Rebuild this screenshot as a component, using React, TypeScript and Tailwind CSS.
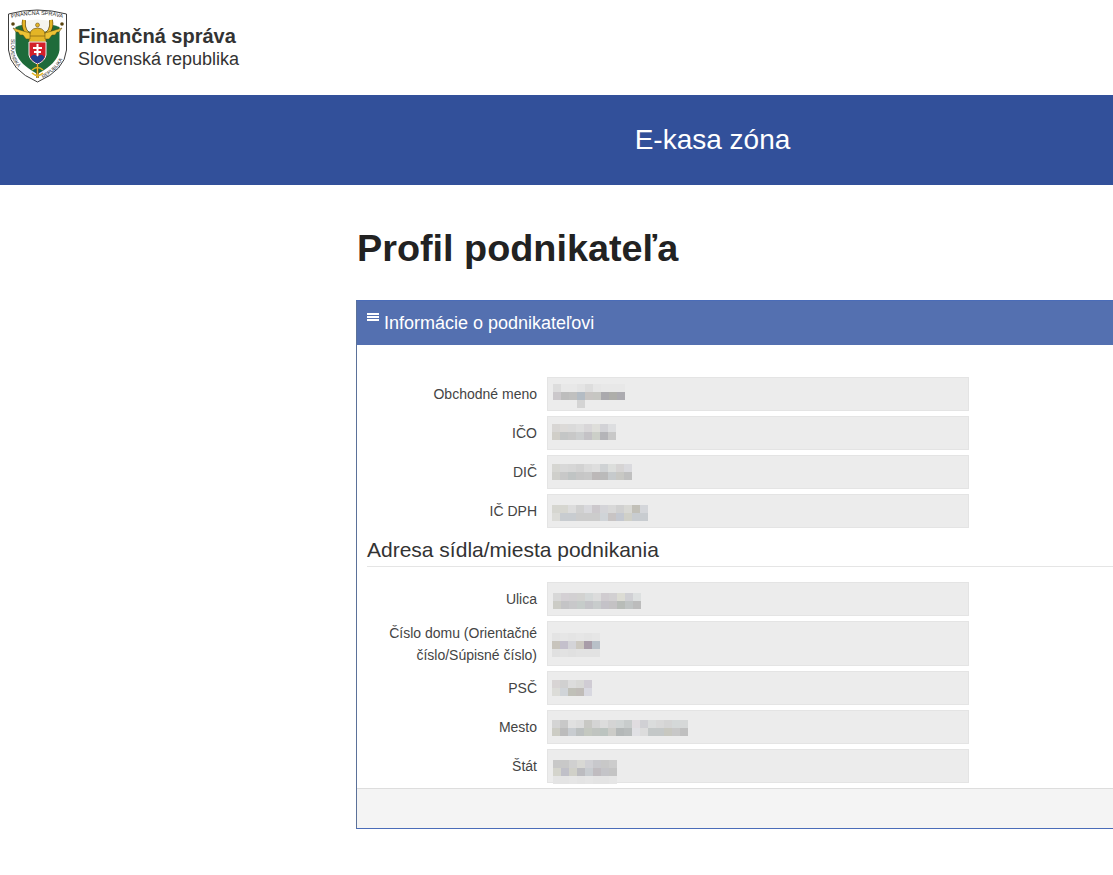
const sans = "font-['Liberation_Sans',Arial,sans-serif]"

type BlurData = { x: number; y: number; rows: string[] }

// pixelated values, one hex colour per 8px cell, "-" is an empty cell
const blurred: Record<string, BlurData> = {
  meno: {
    x: 5,
    y: 6,
    rows: [
      "dddddd e8e8e8 e8e8e8 e4e4e4 dddddd e6e6e6 e8e8e8 e8e8e8 e8e8e8",
      "cbc8cb bdbdbd c0c0bf b4bcc4 c8c5c3 c6c6c2 aaa9ad aeaeaa acabb0",
      "- - - d4d4d4 - - - - -",
    ],
  },
  ico: {
    x: 4,
    y: 7,
    rows: [
      "d8d6d4 dcdad8 dadada dedede d8d6d8 dededa d2d2d6 dddee0",
      "d0cec8 c4c6c6 c8c8c8 cccecf c4c2c6 cccfc8 b4b4b8 c8c8c8",
    ],
  },
  dic: {
    x: 4,
    y: 8,
    rows: [
      "d6d6d2 d8d8d8 d6d6d6 d2d2d2 dadada dedede cfd2d4 dcdedc d6d4d4 dadade",
      "cfcfcb c8c8c8 c0c4c4 c6c6c6 c8c8c8 bcb8b8 bababa c6cacc c8c8c4 c0c0c0",
    ],
  },
  dph: {
    x: 4,
    y: 10,
    rows: [
      "d6d6d0 d6d6d0 dcdcdc d0d0d0 d8d8dc ccc8cc d4d4d8 d8d8d8 d0d0d0 d8d8d4 c2c0b8 d4d6da",
      "dcdcd8 c8ccd0 c8ccd0 cccccc cccccc cccccc d0d4d8 c8c4c4 c4c8d0 d0d0c8 c8ccd0 c8ccd0",
    ],
  },
  ulica: {
    x: 5,
    y: 10,
    rows: [
      "d8d8d8 d4d0d4 d2d0d2 d2d2d0 d4d8d8 dcdcdc d0ccd0 d2d0d2 dcdcd4 d0d0d4 dde0e0",
      "ccccc6 c4c4c6 c8c8ca c6ccca c4c4c8 c8cccc c4c2c8 c4c2c4 b8bcb8 c0c4c4 bcbcbc",
    ],
  },
  cislo: {
    x: 4,
    y: 11,
    rows: [
      "e4e4e4 e6e6e6 e4e4e4 e6e6e6 e4e4e4 e6e6e6",
      "c8c4bc c4c0cc d4d4d8 ccc8c0 a89ca8 b8c0c8",
      "e0e0e0 e2e2e2 e0e0e0 e2e2e2 e2e2e2 e2e2e2",
    ],
  },
  psc: {
    x: 4,
    y: 8,
    rows: [
      "d8d4d4 d0d0d0 dcdcdc d8d8d6 d0ccd4",
      "dcdcd8 d0d4d8 c0c0b8 c0bcb8 d8d8e0",
    ],
  },
  mesto: {
    x: 4,
    y: 9,
    rows: [
      "d4d4d4 c8c8c8 e0e0e0 dcdcdc c8c8c4 d4d4d4 dcdcdc d4d4d4 d0d4d4 c8cccc e0dce0 d0d0d4 dadcdc d8d8d8 d4d4d4 d4d8d8 d6d8d8",
      "ccccc4 bcbcbc c8ccd0 bcc0c0 c4c8c0 c0c4c0 bcc4c0 ccccc8 b4b8b8 b8bcbc e0e0e4 dcdcdc c4c8c8 c4c8c8 c8c8c0 c8c8c8 c0c0c0",
    ],
  },
  stat: {
    x: 5,
    y: 10,
    rows: [
      "c8c8c8 c8c8c8 d0d0d0 d8d8d4 d0d0d4 c8c8cc c8c8c8 cccccc",
      "d4d4cc c0c0c8 d0d0c8 bcbcc0 c8ccd0 c0bcc0 c4c4c8 c4c4c4",
      "e4e4e4 e4e4e4 e6e6e6 e4e4e4 e6e6e6 e4e4e4 e4e4e4 e6e6e6",
    ],
  },
}

function Blur({ data }: { data: BlurData }) {
  return (
    <div className="flex flex-col blur-[0.4px]" style={{ marginLeft: data.x, marginTop: data.y }}>
      {data.rows.map((row, i) => (
        <div key={i} className="flex">
          {row.split(" ").map((c, j) => (
            <div key={j} className="h-2 w-2" style={{ backgroundColor: c === "-" ? "transparent" : `#${c}` }} />
          ))}
        </div>
      ))}
    </div>
  )
}

function Field({ label, data, tall }: { label: React.ReactNode; data: BlurData; tall?: boolean }) {
  return (
    <div className="flex">
      <div className="flex w-[180px] shrink-0 items-center justify-end pr-[10px] text-right text-[14px] leading-[22px] text-[#444]">
        <span>{label}</span>
      </div>
      <div className={`flex w-[422px] items-start border border-[#e4e4e4] bg-[#ececec] ${tall ? "h-[45px]" : "h-[34px]"}`}>
        <Blur data={data} />
      </div>
    </div>
  )
}

function Logo() {
  return (
    <svg width="61" height="75" viewBox="0 0 61 75" className="mb-[4px] shrink-0">
      <path d="M1.5 6 Q30 -2 59.5 6 L59.5 42 Q58 62 30.5 74 Q3 62 1.5 42 Z" fill="#fff" stroke="#3c3c3c" strokeWidth="1" />
      <path d="M8.5 19 Q30 11 52.5 19 L52.5 42 Q51 55 30.5 66 Q10 55 8.5 42 Z" fill="#1e6b3a" />
      <path d="M14 14 Q30 9 47 14 Q46 24 30.5 25 Q15 24 14 14 Z" fill="#f4f4ee" />
      <path d="M17 12 Q15 28 30.5 28 Q46 28 44 12" fill="none" stroke="#5a4510" strokeWidth="4" />
      <path d="M17 12 Q15 28 30.5 28 Q46 28 44 12" fill="none" stroke="#e4b526" strokeWidth="2.8" />
      <circle cx="30.5" cy="17" r="2" fill="#e4b526" stroke="#5a4510" strokeWidth="0.5" />
      <path d="M22 34 Q21 20 30.5 20 Q40 20 39 34 Z" fill="#e4b526" stroke="#5a4510" strokeWidth="0.6" />
      <path d="M21 28 H40" stroke="#8a6a14" strokeWidth="0.8" />
      <path d="M23 25 L6 20 L9 24 L11 24 L13 27 L16 27 L19 31 L23 31 Z" fill="#ecc235" stroke="#5a4510" strokeWidth="0.5" />
      <path d="M38 25 L55 20 L52 24 L50 24 L48 27 L45 27 L42 31 L38 31 Z" fill="#ecc235" stroke="#5a4510" strokeWidth="0.5" />
      <path d="M22 34 H39 V47 Q38 53 30.5 56 Q23 53 22 47 Z" fill="#d3202a" stroke="#f4f4f4" strokeWidth="1" />
      <path d="M29.5 36 H31.5 V39 H35 V41 H31.5 V43 H34 V45 H31.5 V50 H29.5 V45 H27 V43 H29.5 V41 H26 V39 H29.5 Z" fill="#fff" />
      <path d="M23.5 49 Q27 45 30.5 48.5 Q34 45 37.5 49 Q36 53 30.5 55.5 Q25 53 23.5 49 Z" fill="#1f3f8f" />
      <path d="M30.5 56 V70" stroke="#5a4510" strokeWidth="2.4" />
      <path d="M30.5 56 V70" stroke="#e4b526" strokeWidth="1.4" />
      <path d="M25 62 Q30.5 57 36 62 M25 65 Q30.5 70 36 65" stroke="#e4b526" strokeWidth="1.6" fill="none" />
      <circle cx="6" cy="16" r="1.8" fill="#5a4510" />
      <circle cx="55" cy="16" r="1.8" fill="#5a4510" />
      <path id="logo-top" d="M3.5 10.5 Q30.5 3 57.5 10.5" fill="none" />
      <path id="logo-left" d="M3.5 23 L3.5 42 Q5 60 27 71.5" fill="none" />
      <path id="logo-right" d="M34 71.5 Q56 60 57.5 42 L57.5 23" fill="none" />
      <text fontSize="5.5" fill="#222" fontFamily="Liberation Sans">
        <textPath href="#logo-top" startOffset="1">FINANČNÁ SPRÁVA</textPath>
      </text>
      <text fontSize="5" fill="#222" fontFamily="Liberation Sans">
        <textPath href="#logo-left" startOffset="8">SLOVENSKÁ</textPath>
      </text>
      <text fontSize="5" fill="#222" fontFamily="Liberation Sans">
        <textPath href="#logo-right" startOffset="2">REPUBLIKA</textPath>
      </text>
    </svg>
  )
}

export default function App() {
  return (
    <div className={`h-[875px] w-[1113px] overflow-hidden bg-white ${sans}`}>
      <header className="flex h-[95px] items-center gap-[10px] pl-[7px]">
        <Logo />
        <div className="leading-[23px] text-[#333]">
          <div className="text-[20px] font-bold">Finančná správa</div>
          <div className="text-[18px]">Slovenská republika</div>
        </div>
      </header>

      <div className="flex h-[90px] items-center justify-center bg-[#32509a] pl-[312px] text-[28px] text-white">
        E-kasa zóna
      </div>

      <main className="ml-[356px] w-[800px] pl-[1px]">
        <h1 className="mt-[41px] mb-[30px] text-[37.8px] leading-[44px] font-bold text-[#222]">Profil podnikateľa</h1>

        <section className="-ml-[1px] border border-[#4a6cb8] border-l-[#5b7199]">
          <div className="flex h-[44px] items-center bg-[#5470b0] pl-[10px] text-[18px] text-white">
            <svg width="12" height="8" viewBox="0 0 12 8" className="mr-[5px] -mt-[12px]" fill="#fff">
              <rect y="0" width="12" height="2" />
              <rect y="3" width="12" height="2" />
              <rect y="6" width="12" height="2" />
            </svg>
            Informácie o podnikateľovi
          </div>

          <div className="pt-[32px] pb-[5px]">
            <div className="flex flex-col gap-[5px] pl-[10px]">
              <Field label="Obchodné meno" data={blurred.meno} />
              <Field label="IČO" data={blurred.ico} />
              <Field label="DIČ" data={blurred.dic} />
              <Field label="IČ DPH" data={blurred.dph} />
            </div>

            <h2 className="mx-[10px] mt-[8px] mb-[15px] border-b border-[#e5e5e5] pb-[2px] text-[21px] leading-[28px] text-[#333]">
              Adresa sídla/miesta podnikania
            </h2>

            <div className="flex flex-col gap-[5px] pl-[10px]">
              <Field label="Ulica" data={blurred.ulica} />
              <Field
                tall
                label={
                  <>
                    Číslo domu (Orientačné
                    <br />
                    číslo/Súpisné číslo)
                  </>
                }
                data={blurred.cislo}
              />
              <Field label="PSČ" data={blurred.psc} />
              <Field label="Mesto" data={blurred.mesto} />
              <Field label="Štát" data={blurred.stat} />
            </div>
          </div>

          <div className="h-[40px] border-t border-[#ddd] bg-[#f4f4f4]" />
        </section>
      </main>
    </div>
  )
}
